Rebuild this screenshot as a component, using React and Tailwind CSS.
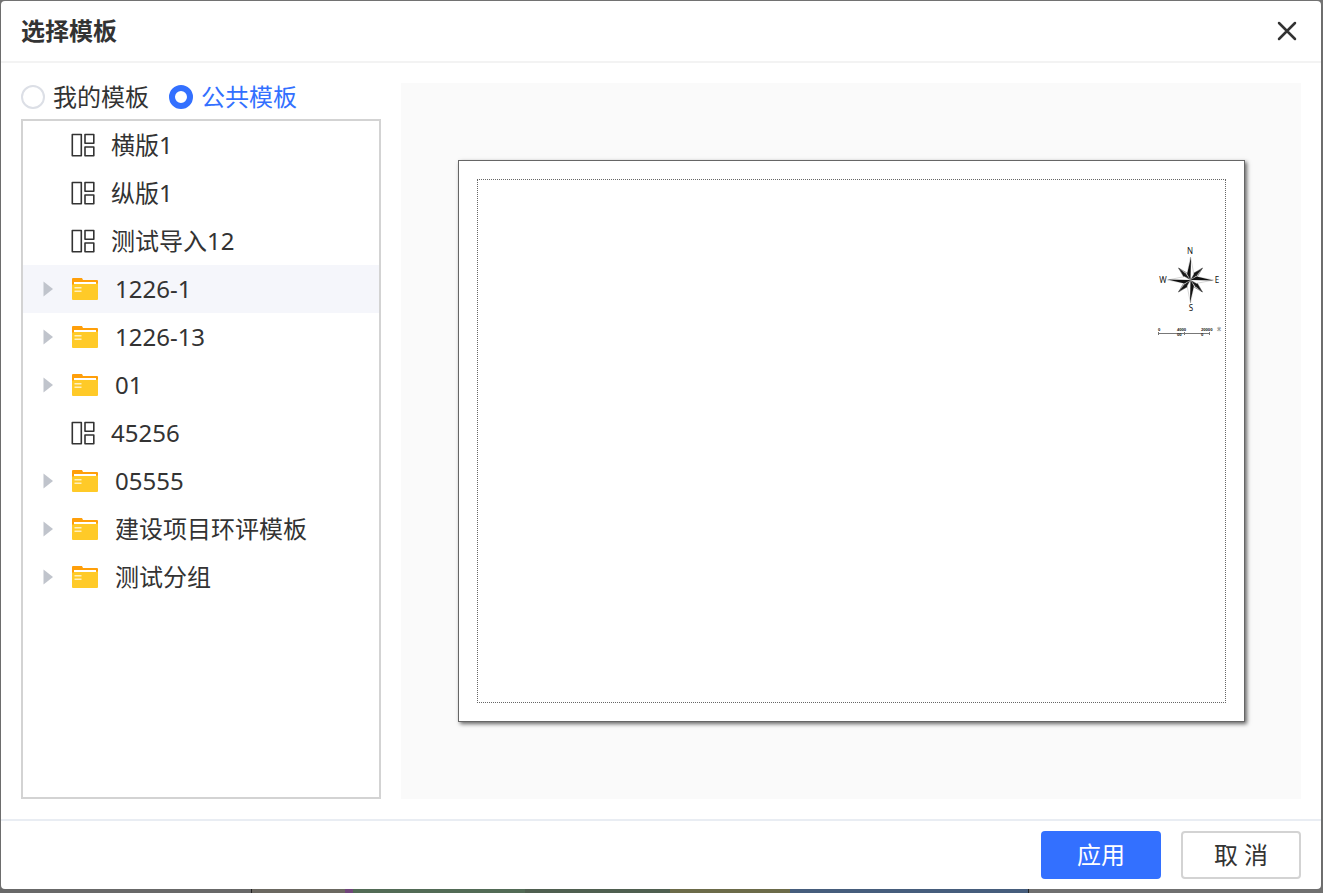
import React, { useState } from 'react';
import clsx from 'clsx';

const templates = [
  { id: 1, name: '横版1', type: 'template' },
  { id: 2, name: '纵版1', type: 'template' },
  { id: 3, name: '测试导入12', type: 'template' },
  { id: 4, name: '1226-1', type: 'folder' },
  { id: 5, name: '1226-13', type: 'folder' },
  { id: 6, name: '01', type: 'folder' },
  { id: 7, name: '45256', type: 'template' },
  { id: 8, name: '05555', type: 'folder' },
  { id: 9, name: '建设项目环评模板', type: 'folder' },
  { id: 10, name: '测试分组', type: 'folder' },
];

const TemplateIcon = () => (
  <svg className="w-6 h-6 shrink-0" viewBox="0 0 24 24" fill="none" stroke="#333333" strokeWidth="1.600" strokeLinejoin="round">
    <path d="M1.300 1.500h9v21.300h-9z" />
    <path d="M14 1.500h8.800v8.800H14z" />
    <path d="M14 14h8.800v8.800H14z" />
  </svg>
);

const FolderIcon = () => (
  <svg className="w-7 h-6 shrink-0" viewBox="0 0 28 24">
    <path d="M1 2a1 1 0 0 1 1-1h9l1 2h14a1 1 0 0 1 1 1v8H1z" fill="#ff9f0a" />
    <path d="M3 5h22v5H3z" fill="#ffffff" />
    <path d="M1 7.500h2V7h22v-.5h2V22a1 1 0 0 1-1 1H2a1 1 0 0 1-1-1z" fill="#ffca28" />
    <path d="M3.500 10.700h7M3.500 14.200h7" stroke="#fff0bd" strokeWidth="1.500" />
  </svg>
);

const Compass = () => (
  <svg className="w-16 h-[68px]" viewBox="0 0 64 68" fontFamily="Noto Sans, sans-serif" fontSize="8" textAnchor="middle" fill="#111111">
    <text x="32" y="8">N</text>
    <text x="33" y="65">S</text>
    <text x="5" y="37">W</text>
    <text x="59" y="37">E</text>
    <g transform="translate(32.500 34)">
      {[45, 135, 225, 315].map((angle) => (
        <g key={angle} transform={`rotate(${angle})`}>
          <path d="M0 -17L2.800 -6L0 0L-2.800 -6z" fill="#ffffff" stroke="#333333" strokeWidth="0.500" />
          <path d="M0.300 -17L-2.800 -6L0 0z" />
          <path d="M0 -17L1.300 -8L0 0z" />
        </g>
      ))}
      {[0, 90, 180, 270].map((angle) => (
        <g key={angle} transform={`rotate(${angle})`}>
          <path d="M0 -23L3.400 -6L0 0L-3.400 -6z" fill="#ffffff" stroke="#999999" strokeWidth="0.400" />
          <path d="M0.500 -23L-3.400 -6L0 0z" />
        </g>
      ))}
    </g>
  </svg>
);

const ScaleBar = () => (
  <svg className="w-[66px] h-3" viewBox="0 0 66 12" fontFamily="Noto Sans, Noto Sans CJK SC, sans-serif" fontSize="4" fontWeight="700" fill="#222222">
    <path d="M2.500 6v3M28.500 6v3M53.500 6v3M2 7.500h52" stroke="#777777" fill="none" />
    <text x="2" y="5">0</text>
    <text x="21" y="5">4000</text>
    <text x="21" y="10">00</text>
    <text x="45" y="5">20000</text>
    <text x="45" y="10">0</text>
    <text x="61" y="5" fill="#888888">米</text>
  </svg>
);

const TreeItem = ({ item, active, onSelect }) => {
  const isFolder = item.type === 'folder';

  return (
    <li>
      <button
        type="button"
        onClick={() => onSelect(item.id)}
        className={clsx('w-full h-12 pl-5 flex items-center text-left', active && 'bg-[#f5f6fb]')}
      >
        <span className="w-7 shrink-0">
          {isFolder && (
            <svg className="w-2.5 h-4" viewBox="0 0 10 16">
              <path d="M0.500 0.500L10 8L0.500 15.500z" fill="#c0c4cc" />
            </svg>
          )}
        </span>
        {isFolder ? <FolderIcon /> : <TemplateIcon />}
        <span className="ml-4 truncate">{item.name}</span>
      </button>
    </li>
  );
};

const SourceRadio = ({ label, value, source, onChange }) => (
  <label className={clsx('flex items-center gap-2', source === value && 'text-[#3370ff]')}>
    <input
      type="radio"
      name="source"
      value={value}
      checked={source === value}
      onChange={() => onChange(value)}
      className="appearance-none w-6 h-6 rounded-full bg-white border-2 border-[#dcdfe6] checked:border-6 checked:border-[#3370ff]"
    />
    {label}
  </label>
);

// Slice of the dimmed map page that stays visible under the dialog
const MapEdge = () => (
  <div className="h-1 flex">
    <div className="w-[19%] bg-[#686868]" />
    <div className="w-px bg-[#222222]" />
    <div className="w-[7%] bg-[#6b6861]" />
    <div className="w-2 bg-[#70467a]" />
    <div className="w-[13%] bg-[#526b56]" />
    <div className="w-[11%] bg-[#4f5f50]" />
    <div className="w-[9%] bg-[#6c6b49]" />
    <div className="w-[18%] bg-[#465d7c]" />
    <div className="w-px bg-[#222222]" />
    <div className="flex-1 bg-[#707070]" />
  </div>
);

const App = () => {
  const [source, setSource] = useState('public');
  const [selected, setSelected] = useState(4);

  return (
    <div className="min-h-screen flex flex-col bg-[#737373] pt-px text-2xl text-[#333333] font-['Noto_Sans','Noto_Sans_CJK_SC',sans-serif]">
      <div role="dialog" aria-labelledby="dialog-title" className="flex-1 ml-px mr-0.5 flex flex-col bg-white rounded shadow-md">
        {/* Header */}
        <header className="h-[62px] px-5 flex items-center justify-between border-b-2 border-[#f3f3f3]">
          <h1 id="dialog-title" className="font-bold">选择模板</h1>
          <button type="button" aria-label="关闭" className="w-7 h-7 flex items-center justify-center">
            <svg className="w-5 h-5" viewBox="0 0 20 20" fill="none" stroke="#333333" strokeWidth="2.500" strokeLinecap="round">
              <path d="M2 2l16 16M18 2L2 18" />
            </svg>
          </button>
        </header>

        {/* Body */}
        <main className="flex-1 flex gap-5 p-5">
          <section className="w-[360px] shrink-0 flex flex-col gap-2">
            <div className="h-7 flex items-center gap-5">
              <SourceRadio label="我的模板" value="mine" source={source} onChange={setSource} />
              <SourceRadio label="公共模板" value="public" source={source} onChange={setSource} />
            </div>
            <ul className="flex-1 border-2 border-[#d3d3d3]">
              {templates.map((item) => (
                <TreeItem key={item.id} item={item} active={item.id === selected} onSelect={setSelected} />
              ))}
            </ul>
          </section>

          {/* Template preview */}
          <section className="flex-1 min-w-0 flex items-center justify-center bg-[#fafafa]">
            <div className="w-[787px] max-w-full aspect-[787/562] p-[18px] flex bg-white border border-[#666666] shadow-[2px_2px_4px_#666666]">
              <div className="flex-1 pt-[66px] pr-[3px] flex flex-col items-end border border-dotted border-[#666666]">
                <Compass />
                <div className="mt-3">
                  <ScaleBar />
                </div>
              </div>
            </div>
          </section>
        </main>

        {/* Footer */}
        <footer className="h-[70px] px-5 flex items-center justify-end gap-5 border-t-2 border-[#e9edf3]">
          <button type="button" className="w-[120px] h-12 rounded bg-[#3370ff] text-white">应用</button>
          <button type="button" className="w-[120px] h-12 rounded border-2 border-[#d3d3d3] bg-white">取 消</button>
        </footer>
      </div>
      <MapEdge />
    </div>
  );
};

export default App;
